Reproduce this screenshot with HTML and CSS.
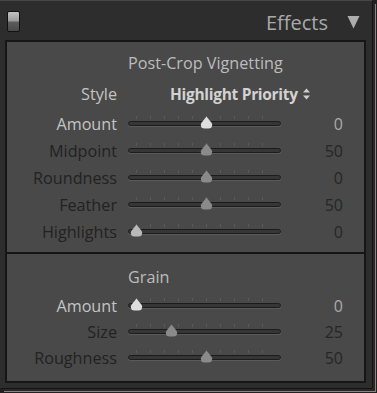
FILE: index.html
```
<!DOCTYPE html>
<html>
<head>
<meta charset="utf-8">
<link rel="stylesheet" href="styles.css">
</head>
<body>
<div class="outer">
  <div class="main">
    <div class="header">
      <div class="toggle"></div>
      <div class="title">Effects</div>
      <svg class="tri" width="13" height="14" viewBox="0 0 13 14"><path d="M0.5 1 L12.5 1 L6.5 13.5 Z" fill="#adadad"/></svg>
    </div>
    <div class="panel">
      <div class="section s1">
        <div class="heading">Post-Crop Vignetting</div>
        <div class="row style-row">
          <div class="label on">Style</div>
          <div class="select">Highlight Priority <svg width="9" height="12" viewBox="0 0 9 12"><path d="M4.5 0.5 L8 4.5 L1 4.5 Z M4.5 11.5 L8 7.5 L1 7.5 Z" fill="#cfcfcf"/></svg></div>
        </div>
        <div class="row">
          <div class="label on">Amount</div>
          <div class="slider"><div class="track"></div><svg class="thumb light" style="--pos:0.5" width="13" height="13" viewBox="0 0 12 12"><path d="M6 0.5 L10.8 6.5 Q12 8.5 10.6 10.4 Q9.6 11.6 7.8 11.6 L4.2 11.6 Q2.4 11.6 1.4 10.4 Q0 8.5 1.2 6.5 Z"/></svg></div>
          <div class="value on">0</div>
        </div>
        <div class="row">
          <div class="label">Midpoint</div>
          <div class="slider"><div class="track"></div><svg class="thumb" style="--pos:0.5" width="13" height="13" viewBox="0 0 12 12"><path d="M6 0.5 L10.8 6.5 Q12 8.5 10.6 10.4 Q9.6 11.6 7.8 11.6 L4.2 11.6 Q2.4 11.6 1.4 10.4 Q0 8.5 1.2 6.5 Z"/></svg></div>
          <div class="value">50</div>
        </div>
        <div class="row">
          <div class="label">Roundness</div>
          <div class="slider"><div class="track"></div><svg class="thumb" style="--pos:0.5" width="13" height="13" viewBox="0 0 12 12"><path d="M6 0.5 L10.8 6.5 Q12 8.5 10.6 10.4 Q9.6 11.6 7.8 11.6 L4.2 11.6 Q2.4 11.6 1.4 10.4 Q0 8.5 1.2 6.5 Z"/></svg></div>
          <div class="value">0</div>
        </div>
        <div class="row">
          <div class="label">Feather</div>
          <div class="slider"><div class="track"></div><svg class="thumb" style="--pos:0.5" width="13" height="13" viewBox="0 0 12 12"><path d="M6 0.5 L10.8 6.5 Q12 8.5 10.6 10.4 Q9.6 11.6 7.8 11.6 L4.2 11.6 Q2.4 11.6 1.4 10.4 Q0 8.5 1.2 6.5 Z"/></svg></div>
          <div class="value">50</div>
        </div>
        <div class="row">
          <div class="label">Highlights</div>
          <div class="slider"><div class="track"></div><svg class="thumb mid" style="--pos:0" width="13" height="13" viewBox="0 0 12 12"><path d="M6 0.5 L10.8 6.5 Q12 8.5 10.6 10.4 Q9.6 11.6 7.8 11.6 L4.2 11.6 Q2.4 11.6 1.4 10.4 Q0 8.5 1.2 6.5 Z"/></svg></div>
          <div class="value">0</div>
        </div>
      </div>
      <div class="section s2">
        <div class="heading">Grain</div>
        <div class="row">
          <div class="label on">Amount</div>
          <div class="slider"><div class="track"></div><svg class="thumb light" style="--pos:0" width="13" height="13" viewBox="0 0 12 12"><path d="M6 0.5 L10.8 6.5 Q12 8.5 10.6 10.4 Q9.6 11.6 7.8 11.6 L4.2 11.6 Q2.4 11.6 1.4 10.4 Q0 8.5 1.2 6.5 Z"/></svg></div>
          <div class="value on">0</div>
        </div>
        <div class="row">
          <div class="label">Size</div>
          <div class="slider"><div class="track"></div><svg class="thumb" style="--pos:0.25" width="13" height="13" viewBox="0 0 12 12"><path d="M6 0.5 L10.8 6.5 Q12 8.5 10.6 10.4 Q9.6 11.6 7.8 11.6 L4.2 11.6 Q2.4 11.6 1.4 10.4 Q0 8.5 1.2 6.5 Z"/></svg></div>
          <div class="value">25</div>
        </div>
        <div class="row">
          <div class="label">Roughness</div>
          <div class="slider"><div class="track"></div><svg class="thumb" style="--pos:0.5" width="13" height="13" viewBox="0 0 12 12"><path d="M6 0.5 L10.8 6.5 Q12 8.5 10.6 10.4 Q9.6 11.6 7.8 11.6 L4.2 11.6 Q2.4 11.6 1.4 10.4 Q0 8.5 1.2 6.5 Z"/></svg></div>
          <div class="value">50</div>
        </div>
      </div>
    </div>
  </div>
</div>
</body>
</html>
```
FILE: styles.css
```
* { box-sizing: border-box; }
html, body { margin: 0; padding: 0; background: #1f1f1f; }
body { width: 377px; height: 393px; overflow: hidden; font-family: "Open Sans", "DejaVu Sans", sans-serif; }
.outer { width: 377px; height: 393px; background: #222; }
.main {
  width: 372px; height: 388px; background: #2d2d2d;
  border-top: 1px solid #474747;
  box-shadow: 1px 1px 0 #141414, 3px 3px 0 #2b2727, 4px 4px 0 #8e8282;
  display: flex; flex-direction: column;
}
.header {
  height: 39px; display: flex; align-items: center;
  padding: 0 12px 0 7px;
}
.toggle {
  width: 13px; height: 21px; margin-top: 2px;
  border: 1px solid #111; border-radius: 2px;
  background: linear-gradient(#c2c2c2 0%, #9a9a9a 48%, #5c5c5c 52%, #4a4a4a 100%);
}
.title {
  margin-left: auto; font-size: 20px; color: #a9a9a9; line-height: 1;
  margin-top: 5px;
}
.tri { margin-left: 19px; margin-top: 3px; }
.panel {
  margin-left: 5px; width: 361px; height: 343px;
  border: 2px solid #161616; background: #494949;
  display: flex; flex-direction: column;
}
.section { display: flex; flex-direction: column; }
.s1 { padding-top: 6px; height: 212px; border-bottom: 2px solid #141414; }
.s2 { padding-top: 8px; flex: 1; }
.heading {
  height: 30px; display: flex; align-items: center;
  padding-left: 121px; font-size: 16.2px; color: #bcbcbc;
}
.row {
  height: 27px; display: grid;
  grid-template-columns: 110px 152px 52px; column-gap: 11px;
  align-items: center;
}
.s2 .row { height: 26px; }
.style-row { height: 32px; }
.label { text-align: right; font-size: 16.2px; color: #222; white-space: nowrap; }
.label.on { color: #c4c4c4; }
.select {
  grid-column: 2 / 4; padding-left: 42px; font-size: 15.5px; font-weight: 700;
  letter-spacing: -0.3px;
  color: #d2d2d2; display: flex; align-items: center; gap: 4px; white-space: nowrap;
}
.value { text-align: right; font-size: 16px; color: #262626; }
.value.on { color: #ababab; }
.slider { position: relative; height: 27px; }
.slider::before {
  content: ""; position: absolute; left: 8px; right: 4px; top: 6px; height: 3px;
  background: repeating-linear-gradient(90deg, rgba(110,110,110,0.45) 0 1px, transparent 1px 14px);
}
.track {
  position: absolute; left: 0; right: -1px; top: 11px; height: 5px;
  border: 1px solid #1c1c1c; border-radius: 3px; background: #363636;
  box-shadow: 0 1px 0 #5a5a5a;
}
.thumb {
  position: absolute; top: 6px;
  left: calc(1.5px + var(--pos) * 140px);
  fill: #8a8a8a;
}
.thumb.light { fill: #dedede; }
.thumb.mid { fill: #b9b9b9; }
```
